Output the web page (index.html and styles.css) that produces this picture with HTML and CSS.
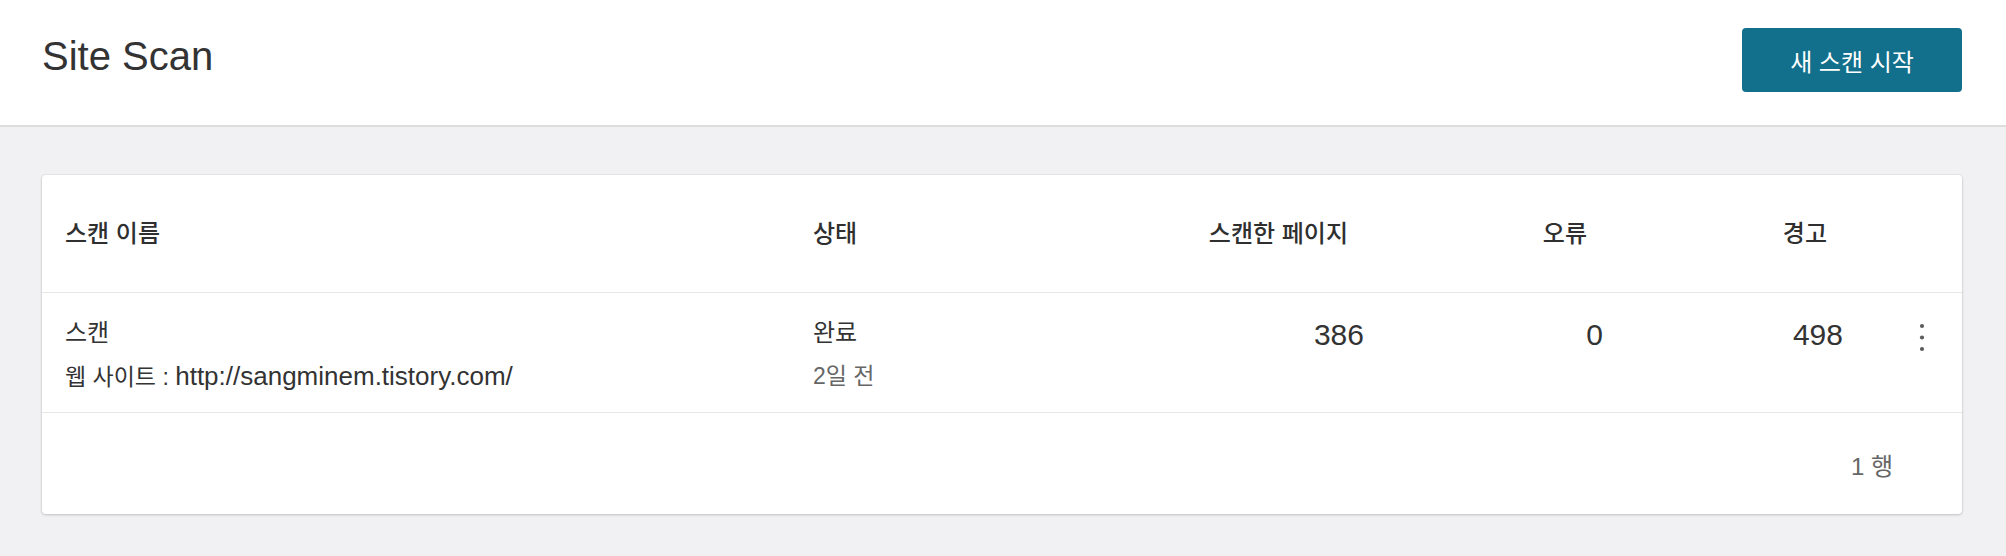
FILE: index.html
```html
<!DOCTYPE html>
<html lang="ko">
<head>
<meta charset="utf-8">
<title>Site Scan</title>
<link rel="stylesheet" href="styles.css">
</head>
<body>
<header class="topbar">
  <h1 class="title">Site Scan</h1>
  <button class="btn-primary" type="button">새 스캔 시작</button>
</header>
<main class="content">
  <section class="card">
    <div class="row head">
      <div class="cell">스캔 이름</div>
      <div class="cell">상태</div>
      <div class="cell num">스캔한 페이지</div>
      <div class="cell num">오류</div>
      <div class="cell num">경고</div>
      <div class="cell"></div>
    </div>
    <div class="row data">
      <div class="cell">
        <div class="primary">스캔</div>
        <div class="secondary">웹 사이트 : <span class="url">http://sangminem.tistory.com/</span></div>
      </div>
      <div class="cell">
        <div class="primary">완료</div>
        <div class="secondary muted">2일 전</div>
      </div>
      <div class="cell value">386</div>
      <div class="cell value">0</div>
      <div class="cell value">498</div>
      <div class="cell menu">
        <svg class="kebab" width="6" height="30" viewBox="0 0 6 30" aria-hidden="true">
          <circle cx="3" cy="3" r="2.1"/>
          <circle cx="3" cy="14.5" r="2.1"/>
          <circle cx="3" cy="26" r="2.1"/>
        </svg>
      </div>
    </div>
    <div class="foot">1 행</div>
  </section>
</main>
</body>
</html>
```

FILE: styles.css
```css
* {
  box-sizing: border-box;
}

html, body {
  margin: 0;
  padding: 0;
}

body {
  background: #f1f1f3;
  font-family: "Liberation Sans", "Noto Sans CJK KR", sans-serif;
  color: #333333;
  width: 2006px;
  height: 556px;
  overflow: hidden;
}

.topbar {
  height: 127px;
  background: #ffffff;
  border-bottom: 2px solid #dedcdc;
  display: flex;
  justify-content: space-between;
  align-items: flex-start;
  padding: 28px 44px 0 42px;
}

.title {
  margin: 8px 0 0 0;
  font-size: 40px;
  line-height: 40px;
  font-weight: 400;
  color: #333333;
}

.btn-primary {
  width: 220px;
  height: 64px;
  border: none;
  border-radius: 4px;
  background: #12708c;
  color: #ffffff;
  font-family: inherit;
  font-size: 24px;
  font-weight: 400;
  padding: 0;
  cursor: pointer;
}

.content {
  padding: 48px 44px 0 42px;
}

.card {
  background: #ffffff;
  border-radius: 4px;
  box-shadow: 0 1px 3px rgba(0, 0, 0, 0.18), 0 0 0 1px rgba(0, 0, 0, 0.03);
}

.row {
  display: grid;
  grid-template-columns: 748px 300px 251px 239px 240px 1fr;
  padding-left: 23px;
  border-bottom: 1px solid #e9e7e4;
}

.head {
  height: 118px;
  align-items: center;
  font-size: 24px;
  line-height: 32px;
  font-weight: 500;
  color: #2f2f2f;
}

.head .num {
  text-align: right;
  padding-right: 16px;
}

.data {
  height: 120px;
  align-items: start;
  padding-top: 22px;
}

.primary {
  font-size: 24px;
  line-height: 36px;
}

.secondary {
  font-size: 23px;
  line-height: 36px;
  margin-top: 7px;
}

.url {
  font-size: 26px;
}

.muted {
  color: #666666;
}

.value {
  font-size: 30px;
  line-height: 36px;
  text-align: right;
  margin-top: 2px;
}

.menu {
  display: flex;
  justify-content: flex-end;
  padding-right: 37px;
  padding-top: 8px;
}

.kebab {
  fill: #5c5c5c;
  display: block;
}

.foot {
  height: 101px;
  display: flex;
  align-items: center;
  justify-content: flex-end;
  padding: 6px 69px 0 0;
  font-size: 24px;
  line-height: 32px;
  color: #666666;
}
```
